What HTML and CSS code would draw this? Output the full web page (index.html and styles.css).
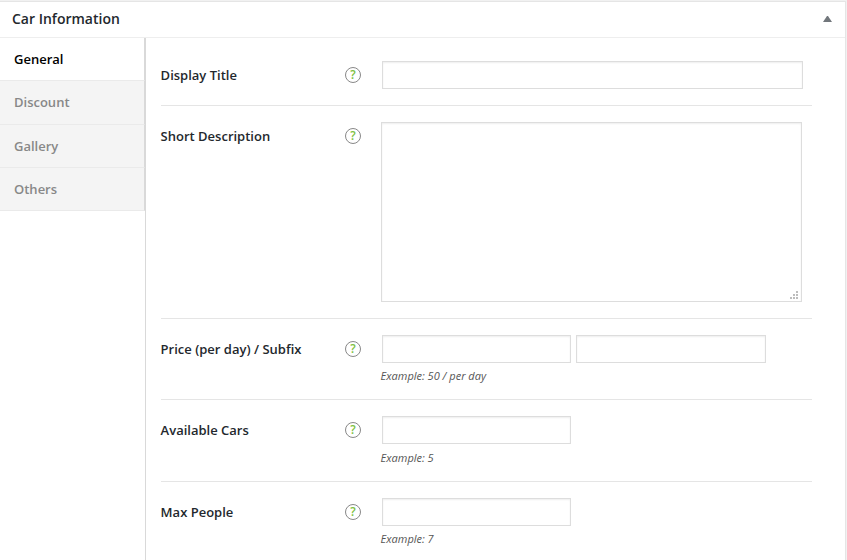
FILE: index.html
```html
<!DOCTYPE html>
<html lang="en">
<head>
<meta charset="utf-8">
<title>Car Information</title>
<link rel="stylesheet" href="styles.css">
</head>
<body>
<section class="postbox">
  <header class="postbox-header">
    <h2>Car Information</h2>
    <svg class="toggle" width="9" height="6" viewBox="0 0 9 6"><path d="M4 0h1l4 6H0z" fill="#72777c"/></svg>
  </header>
  <div class="panel">
    <nav class="tabs">
      <a class="tab active">General</a>
      <a class="tab tall">Discount</a>
      <a class="tab">Gallery</a>
      <a class="tab">Others</a>
    </nav>
    <div class="fields">
      <div class="row">
        <label>Display Title</label><span class="help">?</span>
        <div class="control"><input class="wide" type="text"></div>
      </div>
      <div class="row row-area">
        <label>Short Description</label><span class="help">?</span>
        <div class="control area">
          <textarea></textarea>
          <svg class="grip" width="8" height="8" viewBox="0 0 8 8" fill="#bdbdbd"><path d="M6 0h2v2H6zM3 3h2v2H3zM6 3h2v2H6zM0 6h2v2H0zM3 6h2v2H3zM6 6h2v2H6z"/></svg>
        </div>
      </div>
      <div class="row row-hint">
        <label>Price (per day) / Subfix</label><span class="help">?</span>
        <div class="control"><div class="pair"><input type="text"><input class="suffix" type="text"></div><p>Example: 50 / per day</p></div>
      </div>
      <div class="row row-hint later">
        <label>Available Cars</label><span class="help">?</span>
        <div class="control"><input type="text"><p>Example: 5</p></div>
      </div>
      <div class="row row-hint">
        <label>Max People</label><span class="help">?</span>
        <div class="control"><input type="text"><p>Example: 7</p></div>
      </div>
    </div>
  </div>
</section>
</body>
</html>
```
FILE: styles.css
```css
* { box-sizing: border-box; }
body {
  margin: 0;
  padding-top: 1px;
  height: 560px;
  overflow: hidden;
  background: #f1f1f1;
  color: #23282d;
  font: 13px/18px "Open Sans", sans-serif;
}
.postbox {
  width: 846px;
  height: 559px;
  overflow: hidden;
  background: #fff;
  border-top: 1px solid #e5e5e5;
  border-right: 1px solid #e5e5e5;
}
.postbox-header {
  display: flex;
  justify-content: space-between;
  height: 36px;
  padding: 7px 13px 0 12px;
  border-bottom: 1px solid #eee;
}
h2 { margin: 0; font-size: 14px; line-height: 20px; font-weight: 600; }
.toggle { margin-top: 7px; }
.panel { display: flex; height: 540px; }
.tabs { width: 145px; flex: none; }
.tab {
  display: block;
  height: 43px;
  padding: 12px 14px;
  background: #f4f4f4;
  border-right: 1px solid #d9d9d9;
  border-bottom: 1px solid #eaeaea;
  color: #888;
  font-weight: 600;
}
.tab.active { background: #fff; color: #000; }
.tab.tall { height: 44px; }
.fields { flex: 1; padding: 7px 33px 0 15px; border-left: 1px solid #d9d9d9; }
.row {
  display: flex;
  height: 61px;
  padding-top: 16px;
  border-bottom: 1px solid #e5e5e5;
}
.row-area { height: 213px; }
.row-hint { height: 81px; }
.row-hint.later { height: 82px; }
label { width: 184px; padding-top: 5px; font-weight: 600; text-indent: -0.4px; }
.help {
  width: 16px;
  height: 16px;
  margin: 6px 20px 0 0;
  border: 1px solid #888;
  border-radius: 50%;
  color: #7dc142;
  font-size: 12px;
  line-height: 14px;
  font-weight: 600;
  text-align: center;
}
.control { flex: 1; }
input, textarea {
  display: block;
  width: 189px;
  height: 28px;
  margin: 0 0 0 1px;
  padding: 3px 5px;
  border: 1px solid #ddd;
  border-radius: 0;
  background: #fff;
  box-shadow: inset 0 1px 2px rgba(0, 0, 0, .07);
  resize: none;
}
input.wide { width: 421px; }
input.suffix { width: 190px; }
textarea { width: 421px; height: 180px; margin: 0; }
.area { position: relative; }
.grip { position: absolute; left: 409px; top: 169px; }
.pair { display: flex; gap: 4px; }
p { margin: 4px 0 0; color: #555; font-size: 11px; line-height: 17px; font-style: italic; text-indent: -0.4px; }
.later p { margin-top: 5px; }
```
